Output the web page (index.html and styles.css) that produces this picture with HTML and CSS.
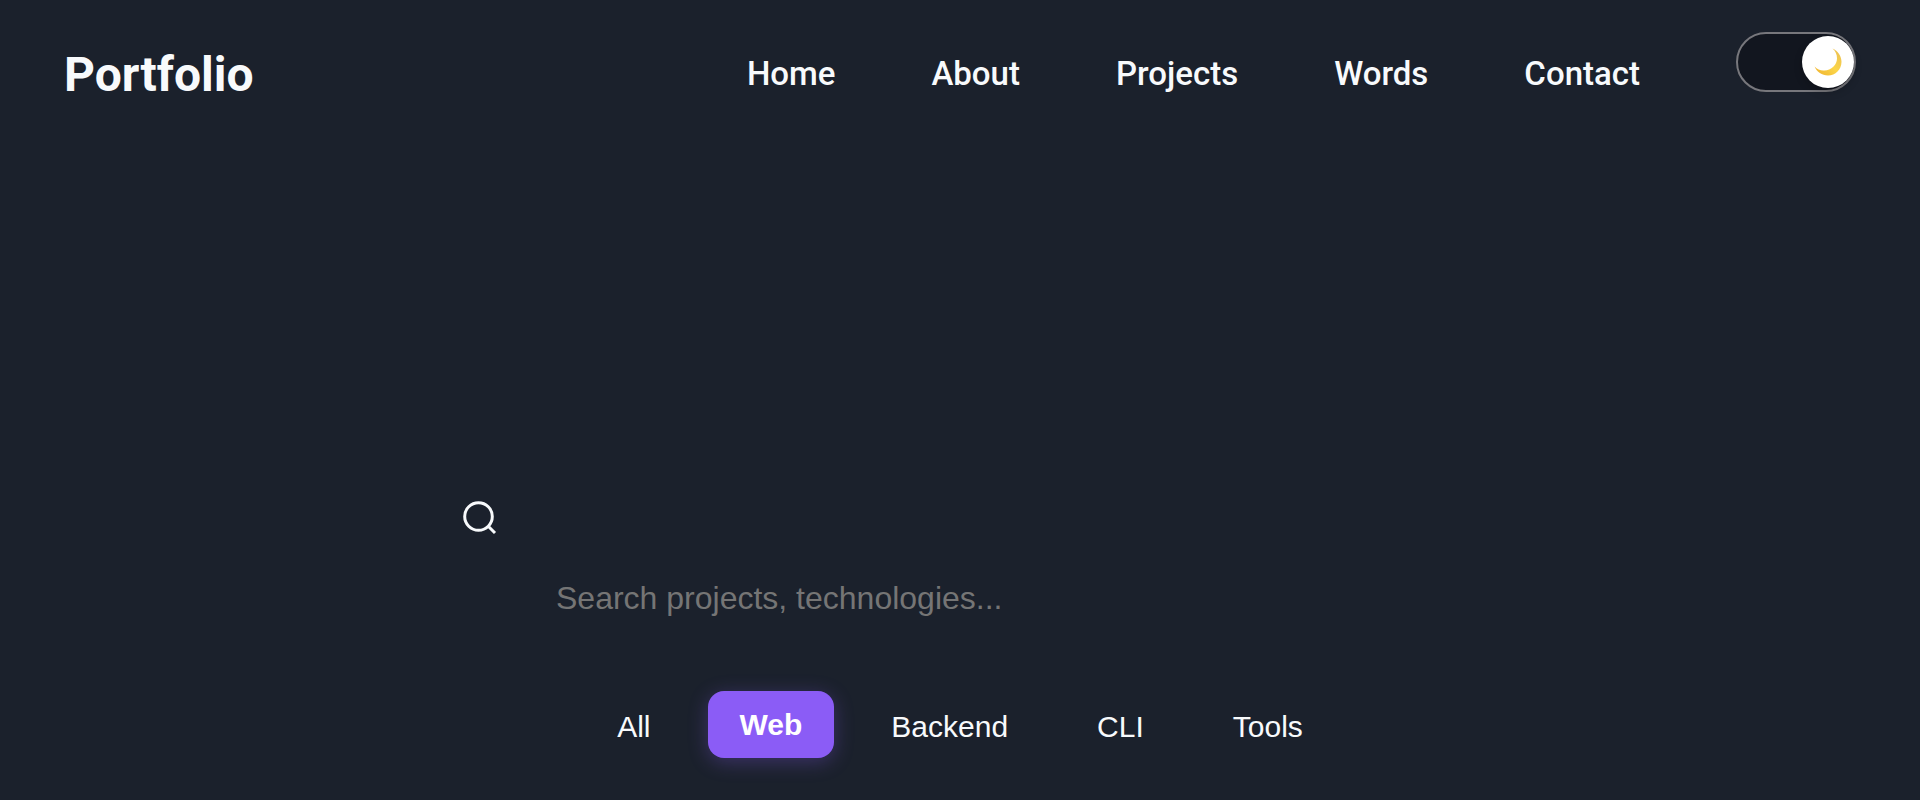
FILE: index.html
```html
<!DOCTYPE html>
<html lang="en">
<head>
<meta charset="utf-8">
<meta name="viewport" content="width=device-width, initial-scale=1">
<title>Portfolio</title>
<link rel="stylesheet" href="styles.css">
</head>
<body>
<header class="header">
  <a class="logo" href="#">Portfolio</a>
  <nav class="nav" aria-label="Main">
    <a class="nav-link" href="#home">Home</a>
    <a class="nav-link" href="#about">About</a>
    <a class="nav-link" href="#projects">Projects</a>
    <a class="nav-link" href="#words">Words</a>
    <a class="nav-link" href="#contact">Contact</a>
  </nav>
  <button class="theme-toggle" type="button" aria-label="Toggle theme">
    <span class="knob">
      <svg class="moon" viewBox="0 0 28 28" aria-hidden="true">
        <defs>
          <linearGradient id="moon-fill" x1="0" y1="1" x2="1" y2="0">
            <stop offset="0" stop-color="#eeb02e"/>
            <stop offset="0.5" stop-color="#fbd548"/>
            <stop offset="1" stop-color="#e9bd55"/>
          </linearGradient>
        </defs>
        <path d="M18.500 0.500C24 3 27.500 8 27.500 13.800C27.500 21.500 21.500 27.500 14 27.500C8 27.500 2.800 24 0.600 18.500C3 21.500 6.500 22.700 10.200 22.500C17.500 22.200 23 17 23 10.500C23 6.500 21.500 3 18.500 0.500Z" fill="url(#moon-fill)"/>
      </svg>
    </span>
  </button>
</header>
<main class="main">
  <form class="search" role="search">
    <svg class="search-icon" viewBox="0 0 40 40" aria-hidden="true">
      <circle cx="18.500" cy="17.500" r="13.800"/>
      <path d="M28 27L35 34"/>
    </svg>
    <input class="search-input" type="search" aria-label="Search projects" placeholder="Search projects, technologies...">
  </form>
  <div class="filters" role="group" aria-label="Filter projects">
    <button class="filter" type="button">All</button>
    <button class="filter active" type="button" aria-pressed="true">Web</button>
    <button class="filter" type="button">Backend</button>
    <button class="filter" type="button">CLI</button>
    <button class="filter" type="button">Tools</button>
  </div>
</main>
</body>
</html>
```
FILE: styles.css
```css
* {
  box-sizing: border-box;
}

body {
  margin: 0;
  background: #1b212c;
  color: #f8fafc;
  font-family: Roboto, "Liberation Sans", sans-serif;
}

.header {
  display: flex;
  align-items: flex-start;
  padding: 32px 64px;
}

.logo {
  margin-right: auto;
  padding: 13px 0 11px;
  color: inherit;
  font-size: 48px;
  font-weight: 700;
  line-height: 60px;
  text-decoration: none;
}

.nav {
  display: flex;
  gap: 96px;
  margin-right: 96px;
  padding: 22px 0;
}

.nav-link {
  color: inherit;
  font-size: 33px;
  font-weight: 500;
  line-height: 40px;
  text-decoration: none;
}

.theme-toggle {
  display: flex;
  justify-content: flex-end;
  width: 120px;
  height: 60px;
  padding: 2px 0;
  border: 2px solid #77777c;
  border-radius: 30px;
  background: #12161f;
  cursor: pointer;
}

.knob {
  display: grid;
  place-items: center;
  width: 52px;
  height: 52px;
  border-radius: 50%;
  background: #fff;
  box-shadow: 0 4px 8px rgba(0, 0, 0, 0.2);
}

.moon {
  width: 28px;
  height: 28px;
}

.main {
  max-width: 1088px;
  margin: 0 auto;
  padding: 351px 44px 32px;
}

.search {
  display: flex;
  flex-direction: column;
}

.search-icon {
  width: 40px;
  height: 40px;
  fill: none;
  stroke: #f8fafc;
  stroke-width: 3;
}

.search-input {
  width: 100%;
  margin-top: 19px;
  padding: 20px 96px;
  border: 0;
  outline: 0;
  background: transparent;
  color: inherit;
  font-family: "Liberation Sans", Arial, sans-serif;
  font-size: 32px;
  line-height: 40px;
}

.search-input::placeholder {
  color: #757575;
}

.filters {
  display: flex;
  justify-content: center;
  gap: 25px;
  margin-top: 55px;
}

.filter {
  padding: 16px 32px;
  border: 0;
  border-radius: 16px;
  background: transparent;
  color: inherit;
  font-family: "Liberation Sans", Arial, sans-serif;
  font-size: 30px;
  line-height: 35px;
  cursor: pointer;
}

.filter.active {
  background: #8b5cf6;
  box-shadow: 0 4px 20px rgba(139, 92, 246, 0.3);
  color: #fff;
  font-weight: 700;
  transform: translateY(-2px);
}
```
